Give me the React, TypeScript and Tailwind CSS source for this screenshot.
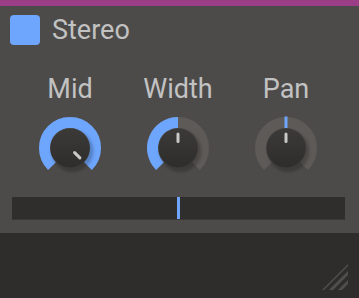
import React from "react";

const BLUE = "#6ea6fd";
const TRACK = "#5e5a57";
const C = 33;

function polar(r: number, deg: number) {
  const a = (deg * Math.PI) / 180;
  return [C + r * Math.sin(a), C - r * Math.cos(a)];
}

function arcPath(r: number, from: number, to: number) {
  const [x0, y0] = polar(r, from);
  const [x1, y1] = polar(r, to);
  const large = to - from > 180 ? 1 : 0;
  return `M ${x0} ${y0} A ${r} ${r} 0 ${large} 1 ${x1} ${y1}`;
}

type KnobProps = {
  id: string;
  fill: [number, number] | null;
  tick?: boolean;
  angle: number;
};

function Knob({ id, fill, tick, angle }: KnobProps) {
  const [ix0, iy0] = polar(6.5, angle);
  const [ix1, iy1] = polar(14, angle);
  const [tx0, ty0] = polar(20, 0);
  const [tx1, ty1] = polar(31.5, 0);
  return (
    <svg width="66" height="66" viewBox="0 0 66 66" className="block">
      <defs>
        <linearGradient id={`${id}-body`} x1="0" y1="0" x2="0" y2="1">
          <stop offset="0" stopColor="#3b3a39" />
          <stop offset="1" stopColor="#2e2d2c" />
        </linearGradient>
        <filter id={`${id}-blur`} x="-30%" y="-30%" width="160%" height="160%">
          <feGaussianBlur stdDeviation="1.6" />
        </filter>
      </defs>
      <path d={arcPath(25.5, -135, 135)} stroke={TRACK} strokeWidth="11" fill="none" />
      {fill && <path d={arcPath(25.5, fill[0], fill[1])} stroke={BLUE} strokeWidth="11" fill="none" />}
      {tick && (
        <line x1={tx0} y1={ty0} x2={tx1} y2={ty1} stroke={BLUE} strokeWidth="3" />
      )}
      <circle cx={C + 2.5} cy={C + 3} r="21" fill="rgba(0,0,0,0.22)" filter={`url(#${id}-blur)`} />
      <circle cx={C} cy={C} r="19.5" fill={`url(#${id}-body)`} />
      <line x1={ix0} y1={iy0} x2={ix1} y2={iy1} stroke="#c9c9c9" strokeWidth="3" strokeLinecap="round" />
    </svg>
  );
}

const knobs: { label: string; props: KnobProps }[] = [
  { label: "Mid", props: { id: "mid", fill: [-135, 135], angle: 135 } },
  { label: "Width", props: { id: "width", fill: [-135, 0], angle: 0 } },
  { label: "Pan", props: { id: "pan", fill: null, tick: true, angle: 0 } },
];

export default function App() {
  return (
    <div
      className="flex h-[298px] w-[359px] flex-col overflow-hidden bg-[#2e2d2b] text-[#c2c2c2]"
      style={{ fontFamily: "Roboto, 'Liberation Sans', sans-serif" }}
    >
      <div className="h-[6px] bg-[#9b3e87]" />
      <div className="flex flex-col bg-[#4c4b49] pb-[13px]">
        <div className="mt-[9px] flex h-[30px] items-center gap-[12px] pl-[10px]">
          <div className="h-[30px] w-[30px] rounded-[4px] bg-[#6ea6fd]" />
          <span className="text-[27px] leading-[30px]">Stereo</span>
        </div>
        <div className="mt-[29px] grid grid-cols-3 pl-4 pr-[19px]">
          {knobs.map((k) => (
            <div key={k.label} className="flex flex-col items-center">
              <span className="text-[27px] leading-[30px]">{k.label}</span>
              <div className="mt-[11px]">
                <Knob {...k.props} />
              </div>
            </div>
          ))}
        </div>
        <div className="mx-[12px] mt-[16px] flex h-[23px] w-[333px] justify-center border-b border-[#393836] bg-[#2f2e2c]">
          <div className="h-full w-[3px] bg-[#6ea6fd]" />
        </div>
      </div>
      <div className="flex flex-1 items-end justify-end pb-[8px] pr-[10px]">
        <svg width="27" height="28" viewBox="0 0 27 28">
          <defs>
            <clipPath id="grip">
              <polygon points="0,28 26,2 26,28" />
            </clipPath>
          </defs>
          <g clipPath="url(#grip)" stroke="#4f4e4c" strokeWidth="3">
            <line x1="-2" y1="30" x2="28" y2="0" />
            <line x1="7" y1="30" x2="37" y2="0" />
            <line x1="16" y1="30" x2="46" y2="0" />
          </g>
        </svg>
      </div>
    </div>
  );
}
